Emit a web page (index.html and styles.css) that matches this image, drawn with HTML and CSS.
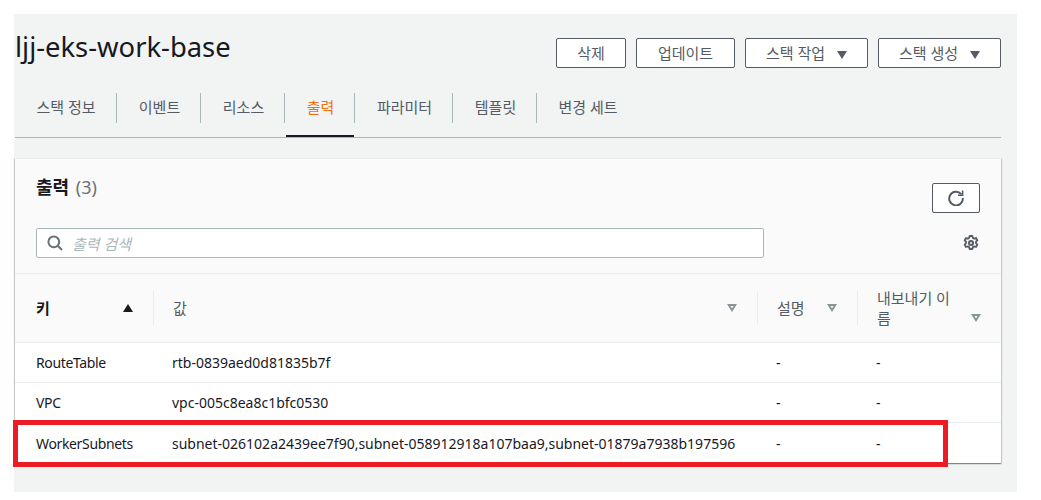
FILE: index.html
```html
<!DOCTYPE html>
<html lang="ko">
<head>
    <meta charset="UTF-8">
    <title>ljj-eks-work-base</title>
    <link rel="stylesheet" href="styles.css">
</head>
<body>
    <div class="page">
        <div class="title-bar">
            <h1>ljj-eks-work-base</h1>
            <div class="actions">
                <button class="btn btn-delete">삭제</button>
                <button class="btn btn-update">업데이트</button>
                <button class="btn btn-menu">스택 작업<span class="caret"></span></button>
                <button class="btn btn-menu">스택 생성<span class="caret"></span></button>
            </div>
        </div>

        <div class="tabs">
            <a class="tab tab-info">스택 정보</a>
            <a class="tab tab-events">이벤트</a>
            <a class="tab tab-res">리소스</a>
            <a class="tab tab-out active">출력</a>
            <a class="tab tab-params">파라미터</a>
            <a class="tab tab-tpl">템플릿</a>
            <a class="tab tab-change">변경 세트</a>
        </div>

        <div class="card">
            <div class="card-head">
                <div class="card-top">
                    <h2>출력 <span class="count">(3)</span></h2>
                    <button class="btn btn-refresh">
                        <svg width="16" height="16" viewBox="0 0 16 16" fill="none" stroke="#545b64" stroke-width="2">
                            <path d="M13.2 4.2A6.8 6.8 0 1 0 14.8 8"/>
                            <path d="M14.6 0.6V5.2H10" stroke-width="1.6"/>
                        </svg>
                    </button>
                </div>
                <div class="card-search">
                    <div class="search">
                        <svg width="16" height="16" viewBox="0 0 16 16" fill="none" stroke="#687078" stroke-width="2">
                            <circle cx="6.8" cy="6.8" r="5.4"/>
                            <path d="M10.8 10.8L15 15"/>
                        </svg>
                        <span class="placeholder">출력 검색</span>
                    </div>
                    <svg class="gear" width="16" height="16" viewBox="0 0 16 16" fill="none" stroke="#545b64" stroke-width="2">
                        <circle cx="8" cy="8" r="2"/>
                        <path d="M6.6 1h2.8l.4 1.9 1.3.7 1.9-.6 1.4 2.4-1.4 1.3v1.6l1.4 1.3-1.4 2.4-1.9-.6-1.3.7-.4 1.9H6.6l-.4-1.9-1.3-.7-1.9.6-1.4-2.4 1.4-1.3V6.7L1.6 5.4l1.4-2.4 1.9.6 1.3-.7z" stroke-width="1.8" stroke-linejoin="round"/>
                    </svg>
                </div>
            </div>

            <table class="outputs">
                <colgroup>
                    <col class="col-key">
                    <col class="col-value">
                    <col class="col-desc">
                    <col class="col-export">
                </colgroup>
                <thead>
                    <tr>
                        <th class="th-key"><div class="th-in">키<span class="sort-up"></span></div></th>
                        <th><div class="th-in">값<span class="sort"></span></div></th>
                        <th><div class="th-in">설명<span class="sort"></span></div></th>
                        <th><div class="th-in th-wrap"><span class="th-label">내보내기 이름</span><span class="sort sort-low"></span></div></th>
                    </tr>
                </thead>
                <tbody>
                    <tr>
                        <td class="td-key">RouteTable</td>
                        <td>rtb-0839aed0d81835b7f</td>
                        <td>-</td>
                        <td>-</td>
                    </tr>
                    <tr>
                        <td class="td-key">VPC</td>
                        <td>vpc-005c8ea8c1bfc0530</td>
                        <td>-</td>
                        <td>-</td>
                    </tr>
                    <tr class="row-last">
                        <td class="td-key">WorkerSubnets</td>
                        <td>subnet-026102a2439ee7f90,subnet-058912918a107baa9,subnet-01879a7938b197596</td>
                        <td>-</td>
                        <td>-</td>
                    </tr>
                </tbody>
            </table>
        </div>

        <!-- 강조 표시 -->
        <div class="highlight"></div>
    </div>
</body>
</html>
```

FILE: styles.css
```css
body {
    margin: 0;
    background-color: #fff;
    color: #16191f;
    font-family: "Noto Sans", "Noto Sans CJK KR", sans-serif;
    font-size: 14px;
}
.page {
    position: relative;
    width: 986px;
    height: 478px;
    margin: 14px 0 0 14px;
    padding: 0 16px 0 1px;
    background-color: #f2f3f3;
}
.title-bar {
    display: flex;
    justify-content: space-between;
    height: 79px;
}
h1 {
    margin: 15px 0 0;
    font-size: 27.4px;
    font-weight: 400;
    line-height: 36px;
}
.actions {
    display: flex;
    gap: 10px;
    margin-top: 24px;
}
.btn {
    height: 30px;
    padding: 0;
    border: 1px solid #545b64;
    border-radius: 2px;
    background-color: #fff;
    color: #545b64;
    font-family: inherit;
    font-size: 15px;
    line-height: 20px;
}
.btn-delete {
    width: 70px;
}
.btn-update {
    width: 99px;
}
.btn-menu {
    width: 123px;
}
.caret {
    display: inline-block;
    margin-left: 12px;
    border-top: 8px solid #545b64;
    border-left: 5.5px solid transparent;
    border-right: 5.5px solid transparent;
}
.tabs {
    display: flex;
    height: 44px;
    border-bottom: 1px solid #aab7b8;
}
.tab {
    position: relative;
    height: 30px;
    color: #545b64;
    font-size: 15px;
    line-height: 28px;
    text-align: center;
    text-indent: 2px;
    border-right: 1px solid #aab7b8;
}
.tab-info {
    width: 101px;
    text-indent: 1px;
}
.tab-events {
    width: 83px;
}
.tab-res {
    width: 83px;
}
.tab-out {
    width: 69px;
}
.tab-params {
    width: 97px;
}
.tab-tpl {
    width: 83px;
}
.tab-change {
    width: 102px;
    border-right: none;
    text-indent: 0;
}
.tab.active {
    color: #ec7211;
}
.tab.active::after {
    content: "";
    position: absolute;
    left: 1px;
    right: 0;
    bottom: -14px;
    height: 2px;
    background-color: #16191f;
}
.card {
    margin-top: 20px;
    background-color: #fff;
    border-top: 1px solid #eaeded;
    box-shadow: 0 1px 1px 0 rgba(0, 28, 36, 0.3), 1px 1px 1px 0 rgba(0, 28, 36, 0.15), -1px 1px 1px 0 rgba(0, 28, 36, 0.15);
}
.card-head {
    background-color: #fafafa;
    height: 114px;
    padding: 0 21px;
    border-bottom: 1px solid #eaeded;
}
.card-top {
    display: flex;
    justify-content: space-between;
    height: 69px;
}
h2 {
    margin: 15px 0 0;
    font-size: 18px;
    font-weight: 700;
    line-height: 26px;
}
.count {
    margin-left: 2px;
    color: #687078;
    font-weight: 400;
}
.btn-refresh {
    width: 48px;
    margin-top: 24px;
    display: flex;
    align-items: center;
    justify-content: center;
}
.card-search {
    display: flex;
    justify-content: space-between;
    align-items: center;
}
.search {
    display: flex;
    align-items: center;
    gap: 9px;
    box-sizing: border-box;
    width: 728px;
    height: 30px;
    padding-left: 10px;
    background-color: #fff;
    border: 1px solid #aab7b8;
    border-radius: 2px;
}
.placeholder {
    color: #aab7b8;
    font-size: 15px;
    font-style: italic;
}
.gear {
    margin-right: 1px;
}
.outputs {
    width: 100%;
    table-layout: fixed;
    border-collapse: collapse;
}
.col-key {
    width: 138px;
}
.col-value {
    width: 604px;
}
.col-desc {
    width: 100px;
}
th {
    height: 68px;
    padding: 0;
    background-color: #fafafa;
    border-bottom: 1px solid #eaeded;
    color: #545b64;
    font-size: 15px;
    font-weight: 400;
    text-align: left;
}
.th-key {
    color: #16191f;
    font-weight: 700;
    padding-left: 21px;
}
th + th .th-in {
    border-left: 1px solid #eaeded;
    padding-left: 19px;
}
.th-in {
    box-sizing: border-box;
    height: 34px;
    line-height: 30px;
    padding-right: 20px;
    display: flex;
    justify-content: space-between;
    align-items: center;
}
.th-wrap {
    line-height: 20px;
}
.th-label {
    width: 80px;
}
.sort-up {
    width: 0;
    height: 0;
    border-bottom: 8px solid #16191f;
    border-left: 5px solid transparent;
    border-right: 5px solid transparent;
}
.sort {
    width: 10px;
    height: 8px;
    background-color: #879596;
    clip-path: polygon(0 0, 100% 0, 50% 100%, 0 0, 3.5px 2px, 5px 4.4px, 6.5px 2px, 3.5px 2px);
}
.sort-low {
    align-self: flex-end;
    margin-bottom: 3px;
}
td {
    height: 39px;
    padding: 0 0 0 19px;
    border-bottom: 1px solid #eaeded;
    white-space: nowrap;
    color: #16191f;
}
.td-key {
    padding-left: 21px;
    letter-spacing: -0.35px;
}
.row-last td {
    height: 40px;
    border-bottom: none;
}
.highlight {
    position: absolute;
    left: -1px;
    top: 406px;
    box-sizing: border-box;
    width: 935px;
    height: 47px;
    border: 5px solid #ed1c24;
}
```
